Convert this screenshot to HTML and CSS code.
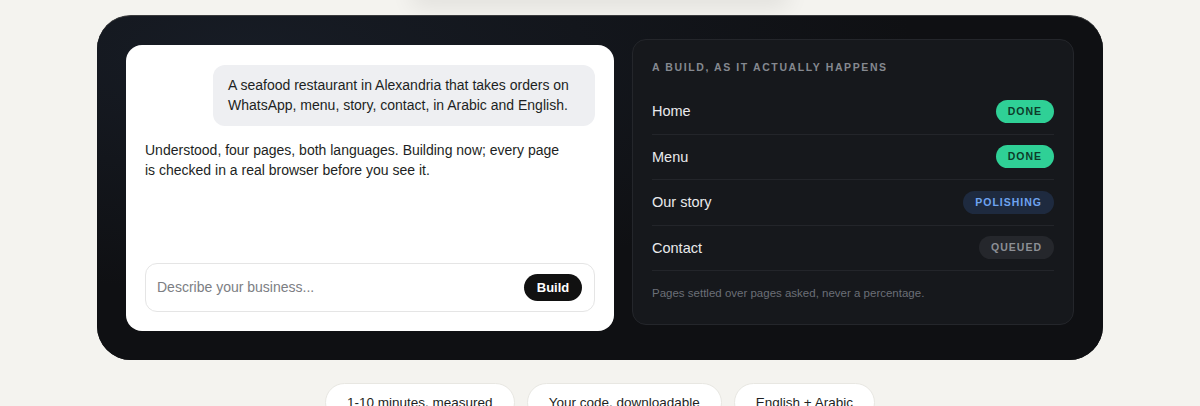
FILE: index.html
```html
<!DOCTYPE html>
<html>
<head>
<meta name="viewport" content="width=device-width, initial-scale=1">
<link rel="stylesheet" href="styles.css">
</head>
<body>
<div class="glow"></div>

<div class="stage">
  <div class="chat">
    <div class="msg me">A seafood restaurant in Alexandria that takes orders on WhatsApp, menu, story, contact, in Arabic and English.</div>
    <div class="msg bot">Understood, four pages, both languages. Building now; every page is checked in a real browser before you see it.</div>

    <div class="ask">
      <input type="text" placeholder="Describe your business...">
      <button>Build</button>
    </div>
  </div>

  <div class="log">
    <div class="cap">A build, as it actually happens</div>
    <div class="row"><span>Home</span><span class="pill done">Done</span></div>
    <div class="row"><span>Menu</span><span class="pill done">Done</span></div>
    <div class="row"><span>Our story</span><span class="pill work">Polishing</span></div>
    <div class="row"><span>Contact</span><span class="pill wait">Queued</span></div>
    <p class="note">Pages settled over pages asked, never a percentage.</p>
  </div>
</div>

<div class="chips">
  <span>1-10 minutes, measured</span>
  <span>Your code, downloadable</span>
  <span>English + Arabic</span>
</div>
</body>
</html>
```

FILE: styles.css
```css
* {box-sizing: border-box;}
body {
  margin: 0;
  background: #f4f3ef;
  font-family: "Liberation Sans", Arial, sans-serif;
  color: #1d1f23;
  overflow: hidden;
}

.glow {
  width: 380px;
  height: 20px;
  margin: -20px auto 0;
  border-radius: 20px;
  box-shadow: 0 6px 22px rgba(0,0,0,.09);
}

.stage {
  width: 1006px;
  margin: 15px auto 0;
  padding: 29px;
  border-radius: 34px;
  background: radial-gradient(ellipse at 15% 10%, #171c25 0%, #0f1013 55%), #0f1013;
  border-top: 1px solid #3a3b3d;
  display: grid;
  grid-template-columns: 488px 1fr;
  gap: 18px;
  align-items: start;
}

.chat {
  background: #fff;
  border-radius: 16px;
  padding: 20px 19px 19px;
  height: 286px;
  display: flex;
  flex-direction: column;
  font-size: 14px;
  line-height: 20px;
}
.msg {max-width: 422px;}
.me {
  align-self: flex-end;
  max-width: 382px;
  width: 382px;
  background: #eeeff2;
  border-radius: 12px;
  padding: 10px 15px 11px;
}
.bot {margin-top: 14px;}

.ask {
  margin-top: auto;
  height: 49px;
  border: 1px solid #e5e5e5;
  border-radius: 12px;
  display: flex;
  align-items: center;
  padding: 0 12px 0 11px;
}
.ask input {
  flex: 1;
  border: 0;
  outline: 0;
  padding: 0 0 2px;
  font: inherit;
  font-size: 14px;
  color: #1d1f23;
}
.ask input::placeholder {color: #7c7e83;}
.ask button {
  height: 27px;
  width: 58px;
  margin-bottom: 1px;
  border: 0;
  border-radius: 14px;
  background: #111;
  color: #fff;
  font: bold 13px "Liberation Sans", Arial, sans-serif;
}

.log {
  margin-top: -6px;
  height: 286px;
  background: #16181c;
  border: 1px solid #24262b;
  border-radius: 14px;
  padding: 20px 19px 0;
  color: #e9eaec;
}
.cap {
  font-size: 10.5px;
  letter-spacing: 1.6px;
  text-transform: uppercase;
  color: #858990;
  font-weight: bold;
  line-height: 14px;
  margin-bottom: 15px;
}
.row {
  display: flex;
  justify-content: space-between;
  align-items: center;
  height: 45.5px;
  border-bottom: 1px solid #23252a;
  font-size: 14.5px;
}
.pill {
  height: 23px;
  line-height: 23px;
  padding: 0 12px;
  border-radius: 12px;
  font-size: 10.5px;
  font-weight: bold;
  letter-spacing: 1px;
  text-transform: uppercase;
}
.done {background: #2fd096; color: #0d3b2a;}
.work {background: #1e2a3f; color: #6ea3ef;}
.wait {background: #25272c; color: #8c8f95;}
.note {
  margin: 16px 0 0;
  font-size: 11.5px;
  color: #6b6f77;
}

.chips {
  display: flex;
  justify-content: center;
  gap: 12px;
  margin-top: 23px;
}
.chips span {
  background: #fff;
  border: 1px solid #e8e7e2;
  border-radius: 22px;
  padding: 11px 21px;
  font-size: 13.5px;
}
```
